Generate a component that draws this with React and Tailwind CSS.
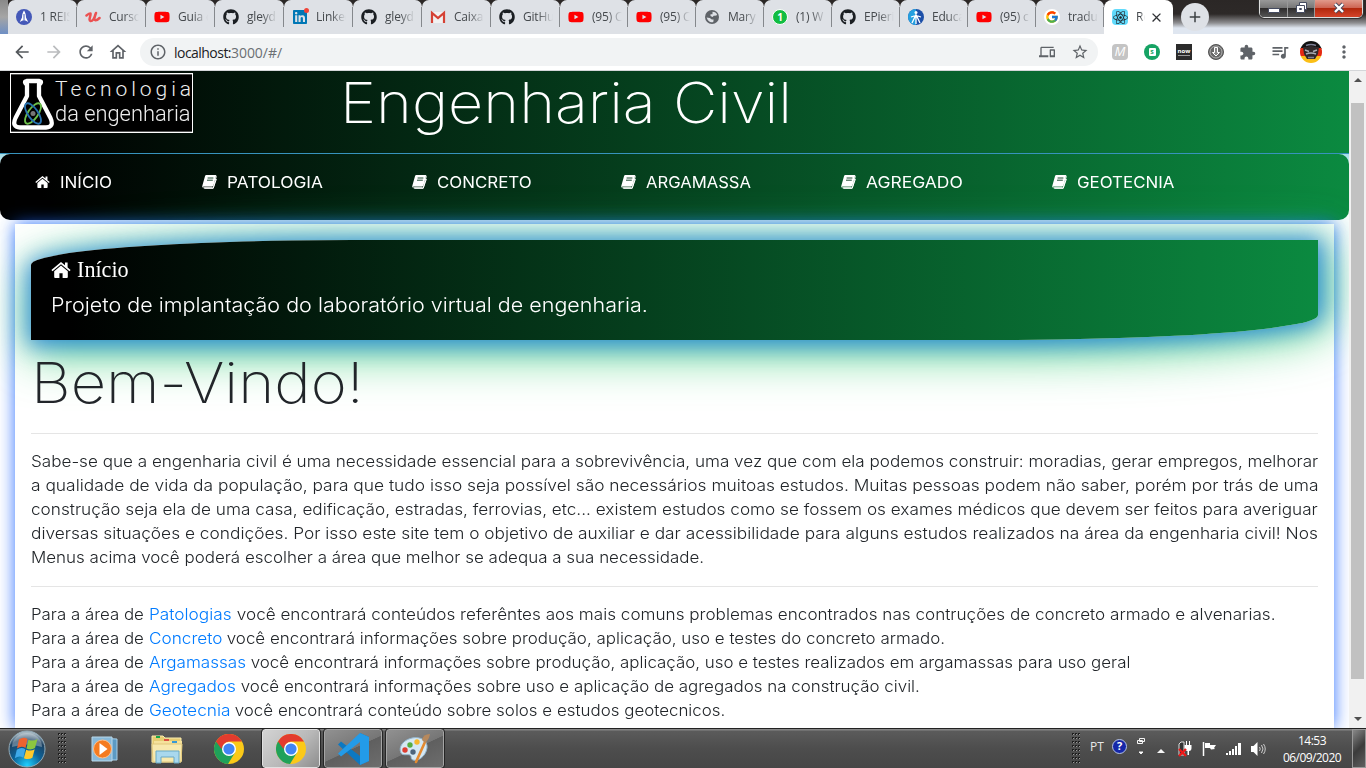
import React, { useLayoutEffect, useRef, useState } from "react";
import { FaGithub, FaYoutube, FaLinkedin, FaReact } from "react-icons/fa";
import { FcGoogle } from "react-icons/fc";
import {
  MdArrowBack, MdArrowForward, MdRefresh, MdInfoOutline, MdOutlineHome, MdDevices,
  MdStarBorder, MdExtension, MdQueueMusic, MdMoreVert, MdPublic, MdClose, MdAdd,
} from "react-icons/md";

/* Sets its tracking so that the text fills the given width. */
function Fit({ width, className = "", children }) {
  const ref = useRef(null);
  const [spacing, setSpacing] = useState(0);
  useLayoutEffect(() => {
    const el = ref.current;
    const natural = el.getBoundingClientRect().width;
    setSpacing((width - natural) / el.textContent.length);
  }, [width]);
  return (
    <span ref={ref} className={"inline-block whitespace-pre " + className} style={{ letterSpacing: spacing + "px" }}>
      {children}
    </span>
  );
}

/* Widens its letters so that the text fills the given width. */
function Wide({ width, className = "", children }) {
  const ref = useRef(null);
  const [scale, setScale] = useState(1);
  useLayoutEffect(() => {
    setScale(width / ref.current.offsetWidth);
  }, [width]);
  return (
    <span className={"inline-block whitespace-pre " + className} style={{ width: width + "px" }}>
      <span ref={ref} className="inline-block origin-left" style={{ transform: `scaleX(${scale})` }}>{children}</span>
    </span>
  );
}

const HomeIcon = ({ className }) => (
  <svg viewBox="0 0 20 16" className={className} fill="currentColor">
    <path d="M10 3.6 3.2 9.3V15q0 .9.9.9h4.3v-4.7h3.2v4.7h4.3q.9 0 .9-.9V9.3z" />
    <path d="M10 0 .4 8l1.1 1.2L10 2.2l8.5 7L19.600 8l-3-2.500V.6h-2.600v2.600z" />
  </svg>
);

const BookIcon = ({ className }) => (
  <svg viewBox="0 0 15 14" className={className}>
    <path d="M4.600.5h8.600q1.400 0 1 1.200l-2.500 9.600q-.3 1-1.400 1H3q-1.100 0-1.300.3c-.2.500.4.800 1.200.8h8.300L14.400 4" fill="none" stroke="currentColor" strokeWidth="1" />
    <path d="M4.500 0h8.400c1 0 1.300.600 1 1.600l-2.300 8.500c-.3 1-.8 1.400-1.800 1.400H2.400C1.500 11.500 1 11.700.7 12.700.2 12.300.1 11.500.4 10.500L3 1.300C3.300.400 3.700 0 4.500 0z" fill="currentColor" />
    <path d="M5.600 3h5.800M5 5.200h5.800" stroke="#04351b" strokeWidth=".9" />
  </svg>
);

const Nasa = () => (
  <svg viewBox="0 0 16 16" className="size-4"><circle cx="8" cy="8" r="8" fill="#4458b8" /><path d="M8 1.500c-1.300 2-2 4-2 7L3.800 13 6.500 11.500h3l2.700 1.500L10 8.500c0-3-.7-5-2-7z" fill="#fff" /><path d="M8 5v8" stroke="#4458b8" /></svg>
);
const Udemy = () => (
  <svg viewBox="0 0 16 16" className="size-4"><path d="M1.500 6.500c2-1.500 3.500-2.500 4-2 .8 1-2.500 7 0 7.500 2 .2 4-3 5-7M11 4c-1.500 4-2.500 7-.5 7.300 1.500.1 3-1.300 4-2.300" fill="none" stroke="#eb5252" strokeWidth="2.500" strokeLinecap="round" /></svg>
);
const Gmail = () => (
  <svg viewBox="0 0 16 16" className="size-4"><path d="M1 3h14v11H1z" fill="#f1f1f1" /><path d="M2 14V3.800L8 9l6-5.200V14" fill="none" stroke="#d54134" strokeWidth="2.200" /></svg>
);
const Linked = () => (
  <span className="relative flex size-4"><FaLinkedin className="size-4 text-[#0077b5]" /><span className="absolute -right-px -top-px size-[5px] rounded-full bg-[#f04438]" /></span>
);
const Whats = () => (
  <span className="flex size-4 items-center justify-center rounded-full border border-white bg-[#12bd42] font-['Open_Sans',sans-serif] text-[10px] font-bold text-white">1</span>
);
const Edu = () => (
  <svg viewBox="0 0 16 16" className="size-4"><circle cx="8" cy="8" r="8" fill="#1c4fa8" /><path d="M8 0v16A8 8 0 0 1 8 0z" fill="#25a0e0" /><circle cx="8" cy="3.500" r="1.500" fill="#fff" /><path d="M8 5.500 4 14M8 5.500 12 14M8 6v9M3 8l5-1.500L13 8" stroke="#fff" strokeWidth="1.300" fill="none" /></svg>
);
const Goog = () => (
  <span className="flex size-4 items-center justify-center rounded-full bg-white"><FcGoogle className="size-[14px]" /></span>
);
const Git = () => <FaGithub className="size-4 text-[#1b1f23]" />;
const Yt = () => <FaYoutube className="size-4 text-[#f00]" />;
const Globe = () => (
  <svg viewBox="0 0 16 16" className="size-4"><circle cx="8" cy="8" r="7" fill="#5f6368" /><path d="M8.500 2.800q3.500 0 4.700 3.200-2 1.200-3.200.5L8.500 8 6.500 7V5.200h2zM2.600 8.500l3.200.5 2 1.500 1.800 0-.3 2.500q-4.500 1.500-6.700-4.500z" fill="#dee1e6" /></svg>
);

const tabs = [
  [Nasa, "1 REIS"], [Udemy, "Curso"], [Yt, "Guia d"], [Git, "gleyd"], [Linked, "Linked"], [Git, "gleyd"],
  [Gmail, "Caixa"], [Git, "GitHu"], [Yt, "(95) C"], [Yt, "(95) C"], [Globe, "Mary"], [Whats, "(1) W"],
  [Git, "EPieri"], [Edu, "Educa"], [Yt, "(95) c"], [Goog, "tradu"],
];

function TabStrip() {
  return (
    <div className="flex h-[34px] bg-[linear-gradient(#2b2726_0,#2d2928_14px,#8f8f92_23px,#dfe6f0_28px)]">
      <div className="h-full w-2 bg-[linear-gradient(#898989,#a5a5a5_50%,#6e8fc4)]" />
      <div className="flex">
        {tabs.map(([Icon, label], i) => (
          <div key={i} className={(i < 8 ? "w-[69px]" : "w-[68px]") + " flex h-full items-center rounded-t-[7px] bg-[#dee1e6]"}>
            <div className="flex h-5 w-full items-center border-r border-[#85888c] pl-2">
              <span className="w-4 shrink-0"><Icon /></span>
              <span className="ml-2 w-[30px] overflow-hidden whitespace-nowrap text-[12px] leading-5 tracking-[-0.2px] text-[#45494d] [mask-image:linear-gradient(to_right,black_50%,transparent)]">{label}</span>
            </div>
          </div>
        ))}
      </div>
      <div className="flex h-full w-[69px] items-center rounded-t-lg bg-white pl-2">
        <span className="flex size-4 items-center justify-center rounded-sm bg-[#61dafb]"><FaReact className="size-[15px] text-[#20232a]" /></span>
        <span className="ml-2 w-[9px] overflow-hidden whitespace-nowrap text-[12px] text-[#45494d] [mask-image:linear-gradient(to_right,black_50%,transparent)]">Re</span>
        <MdClose className="ml-1 size-[15px] text-[#303236]" />
      </div>
      <div className="ml-2 mt-[3px] flex size-7 items-center justify-center rounded-full bg-[#dee1e6]"><MdAdd className="size-[18px] text-[#3c4043]" /></div>
      <div className="ml-[50px] flex h-[18px] w-[104px] overflow-hidden rounded-b-[5px] border border-t-0 border-[#ddd] outline outline-1 outline-[#333]">
        <div className="flex w-7 items-center justify-center border-r border-[#999] bg-[linear-gradient(#999,#777_45%,#2f2d2d_50%,#555)]"><div className="mt-1 h-[5px] w-3 rounded-[1px] border border-[#444b60] bg-white" /></div>
        <div className="flex w-[27px] items-center justify-center border-r border-[#999] bg-[linear-gradient(#999,#777_45%,#2f2d2d_50%,#555)]">
          <svg viewBox="0 0 13 13" className="mb-0.5 size-[13px]"><path d="M4.500 1.500h7v7H9.500v3h-8v-7h3z" fill="#fff" stroke="#444b60" /><path d="M4.500 4.500h5v5M4.500 7.500h2v1h-2z" fill="none" stroke="#444b60" /></svg>
        </div>
        <div className="flex grow items-center justify-center bg-[linear-gradient(#e19a8b,#ce6654_45%,#b2280d_50%,#d4442a)]">
          <svg viewBox="0 0 14 12" className="mb-0.5 h-3 w-[14px]"><path d="M3 2l8 8M11 2l-8 8" stroke="#47455a" strokeWidth="4" /><path d="M3 2l8 8M11 2l-8 8" stroke="#fff" strokeWidth="2.300" /></svg>
        </div>
      </div>
    </div>
  );
}

function Toolbar() {
  return (
    <div className="flex h-[37px] items-center border-b border-[#d4d6d9] bg-white pl-[12px] text-[#5f6368]">
      <MdArrowBack className="size-5 text-[#54585c]" />
      <MdArrowForward className="ml-[12px] size-5 text-[#babcbe]" />
      <MdRefresh className="ml-[12px] size-5" />
      <MdOutlineHome className="ml-[12px] size-5" />
      <div className="ml-3 flex h-7 w-[958px] items-center rounded-full bg-[#f1f3f4] pl-[9px] pr-[9px]">
        <MdInfoOutline className="size-[18px]" />
        <span className="ml-[7px] text-[14px] text-[#202124]"><Fit width={57}>localhost:</Fit><Fit width={51} className="text-[#6b6f73]">3000/#/</Fit></span>
        <MdDevices className="ml-auto size-4" />
        <MdStarBorder className="ml-4 size-[18px]" />
      </div>
      <span className="ml-[14px] flex size-4 items-center justify-center rounded bg-[#c4c4c4] text-[13px] italic text-white">M</span>
      <span className="ml-4 flex size-4 items-center justify-center rounded-full bg-[#16a364]"><span className="flex h-2 w-[7px] items-center justify-center rounded-[1px] bg-white text-[7px] font-bold text-[#16a364]">s</span></span>
      <span className="ml-4 flex h-4 w-4 flex-col items-center justify-center bg-[#2b2b2b] text-[6px] font-bold leading-[7px] text-white">now<span className="h-px w-3 bg-[#999]" /></span>
      <svg viewBox="0 0 16 16" className="ml-4 size-4"><circle cx="8" cy="8" r="7.500" fill="#696969" stroke="#555" /><circle cx="8" cy="8" r="6" fill="none" stroke="#ccc" strokeWidth=".7" /><path d="M6.500 3.500h3v5h2L8 12 4.500 8.500h2z" fill="#888" stroke="#fff" /></svg>
      <MdExtension className="ml-[15px] size-[17px]" />
      <MdQueueMusic className="ml-[14px] size-5" />
      <svg viewBox="0 0 22 22" className="ml-[10px] size-[22px]">
        <clipPath id="face"><circle cx="11" cy="11" r="11" /></clipPath>
        <g clipPath="url(#face)"><path d="M0 0h22v8H0z" fill="#111" /><path d="M0 7h22v8H0z" fill="#e52a12" /><path d="M0 15h22v7H0z" fill="#fbbf16" /><path d="M3 6l4 0q4-2 8 0l4 0-1 7-3 5H7l-3-5z" fill="#30292b" /><path d="M5 9l4 1.500M17 9l-4 1.500M6 13q5-2 10 0" stroke="#a9adb5" strokeWidth="1.500" fill="none" /><path d="M6 4.500q5-2 10 0M8 16.500h6" stroke="#7d7f94" strokeWidth="1.500" fill="none" /></g>
      </svg>
      <MdMoreVert className="ml-[12px] size-5" />
    </div>
  );
}

function Logo() {
  return (
    <div className="flex h-[60px] w-[183px] border border-white bg-black shadow-[inset_0_1px_0_#555,inset_0_-1px_0_#555]">
      <svg viewBox="0 0 42 56" className="ml-px mt-px h-14 w-[42px] shrink-0">
        <path d="M14.500 9.500q-3-3 0-3.500h13q3 .5 0 3.500M15 9v12L3.500 43q-4 9 4.500 9.500h26q8.500-.5 4.500-9.500L27 21V9" fill="none" stroke="#fff" strokeWidth="4.300" strokeLinecap="round" strokeLinejoin="round" />
        <ellipse cx="21" cy="38.500" rx="5" ry="12" transform="rotate(35 21 38.500)" fill="none" stroke="#6cc04a" strokeWidth="1.800" />
        <ellipse cx="21" cy="38.500" rx="5" ry="12" transform="rotate(-35 21 38.500)" fill="none" stroke="#2772b0" strokeWidth="1.800" />
        <circle cx="21" cy="38.500" r="2.500" fill="#777" />
      </svg>
      <div className="flex flex-col pl-px font-['Roboto',sans-serif] font-light text-[#eee]">
        <span className="h-[25px] pt-[3px] text-[21px] leading-[24px]"><Fit width={140}>Tecnologia</Fit></span>
        <span className="text-[22px] leading-[30px]"><Wide width={136}>da engenharia</Wide></span>
      </div>
    </div>
  );
}

const menu = [
  ["INÍCIO", 52, "w-[167px]"], ["PATOLOGIA", 96, "w-[210px]"], ["CONCRETO", 95, "w-[209px]"],
  ["ARGAMASSA", 105, "w-[220px]"], ["AGREGADO", 97, "w-[211px]"], ["GEOTECNIA", 97, "w-[150px]"],
];

const intro = [
  "Sabe-se que a engenharia civil é uma necessidade essencial para a sobrevivência, uma vez que com ela podemos construir: moradias, gerar empregos, melhorar",
  "a qualidade de vida da população, para que tudo isso seja possível são necessários muitoas estudos. Muitas pessoas podem não saber, porém por trás de uma",
  "construção seja ela de uma casa, edificação, estradas, ferrovias, etc... existem estudos como se fossem os exames médicos que devem ser feitos para averiguar",
  "diversas situações e condições. Por isso este site tem o objetivo de auxiliar e dar acessibilidade para alguns estudos realizados na área da engenharia civil! Nos",
  "Menus acima você poderá escolher a área que melhor se adequa a sua necessidade.",
];

const areas = [
  ["Patologias", 83, " você encontrará conteúdos referêntes aos mais comuns problemas encontrados nas contruções de concreto armado e alvenarias.", 1043],
  ["Concreto", 73, " você encontrará informações sobre produção, aplicação, uso e testes do concreto armado.", 723],
  ["Argamassas", 97, " você encontrará informações sobre produção, aplicação, uso e testes realizados em argamassas para uso geral", 884],
  ["Agregados", 87, " você encontrará informações sobre uso e aplicação de agregados na construção civil.", 684],
  ["Geotecnia", 81, " você encontrará conteúdo sobre solos e estudos geotecnicos.", 495],
];

function Page() {
  return (
    <div className="flex h-[657px] bg-white">
      <div className="flex w-[1349px] flex-col overflow-hidden font-['Inter',sans-serif] font-light text-[#212529]">
        <header className="flex h-[83px] shrink-0 items-start border-b border-[#3793bd] bg-[linear-gradient(to_right,#000_0%,#000_3%,#0b8a40_100%)] pl-[10px] pt-[2px]">
          <Logo />
          <h1 className="ml-[147px] -mt-[3px] text-[56px] font-extralight leading-[67px] text-white"><Wide width={452}>Engenharia Civil</Wide></h1>
        </header>
        <div className="h-[66px] shrink-0 bg-[linear-gradient(#a3dce5,#fff_30%)]">
          <nav className="flex h-full rounded-[10px] bg-[linear-gradient(to_right,#000_0%,#000_3%,#0b8a40_100%)] pl-[35px] text-[16px] font-normal text-white">
            {menu.map(([label, w, cell], i) => (
              <a key={label} className={cell + " flex h-14 items-center"}>
                {i === 0 ? <HomeIcon className="h-3 w-[15px]" /> : <BookIcon className="h-[14px] w-[15px]" />}
                <Wide width={w} className="ml-[10px]">{label}</Wide>
              </a>
            ))}
          </nav>
        </div>
        <main className="relative mx-[15px] mt-1 h-[600px] bg-white px-4 pt-4 shadow-[0_0_16px_rgba(30,100,255,0.9)]">
          <section className="h-[100px] rounded-[25%_0_25%_0] bg-[linear-gradient(to_right,#000_0%,#000_3%,#0b8a40_100%)] pl-5 pt-4 text-white shadow-[1px_2px_22px_4px_rgba(20,110,230,0.75),5px_8px_46px_8px_rgba(50,205,110,0.75)]">
            <div className="flex h-7 items-center font-['Liberation_Serif',serif] text-[23px] font-normal"><HomeIcon className="mr-[6px] h-4 w-5" /><Wide width={52}>Início</Wide></div>
            <p className="mt-[6px] text-[20px] leading-[30px]"><Wide width={597}>Projeto de implantação do laboratório virtual de engenharia.</Wide></p>
          </section>
          <h2 className="relative pt-[10px] text-[56px] font-extralight leading-[67px]"><Wide width={333}>Bem-Vindo!</Wide></h2>
          <hr className="mt-4 border-[#e5e5e5]" />
          <div className="mt-[15px] text-[16px] leading-6">
            {intro.map((t, i) => <div key={i} className="h-6"><Wide width={i < 4 ? 1287 : 673}>{t}</Wide></div>)}
          </div>
          <hr className="mt-[17px] border-[#e5e5e5]" />
          <div className="mt-[15px] text-[16px] leading-6">
            {areas.map(([name, w, rest, rw]) => (
              <div key={name} className="h-6 whitespace-nowrap"><Wide width={118}>{"Para a área de "}</Wide><Wide width={w} className="text-[#007bff]">{name}</Wide><Wide width={rw}>{rest}</Wide></div>
            ))}
          </div>
        </main>
      </div>
      <div className="flex w-[17px] flex-col items-center bg-[#f1f1f1]">
        <svg viewBox="0 0 8 4" className="mt-[7px] h-1 w-2"><path d="M4 0l4 4H0z" fill="#505050" /></svg>
        <div className="mt-[21px] h-[576px] w-[13px] bg-[#c1c1c1]" />
        <svg viewBox="0 0 8 4" className="mb-[7px] mt-auto h-1 w-2"><path d="M0 0h8L4 4z" fill="#505050" /></svg>
      </div>
    </div>
  );
}

const Chrome = () => (
  <svg viewBox="0 0 30 30" className="size-[30px]">
    <circle cx="15" cy="15" r="15" fill="#fbc918" />
    <path d="M2 7.500A15 15 0 0 0 14 30l7-11.500-6-3.500z" fill="#1fa15a" />
    <path d="M2 7.500A15 15 0 0 1 28 7.500H15q-6 1-7.500 7.500z" fill="#e33b2e" />
    <circle cx="15" cy="15" r="7" fill="#fff" /><circle cx="15" cy="15" r="5.600" fill="#4285f4" />
  </svg>
);

const Grip = () => (
  <svg viewBox="0 0 9 31" className="h-[31px] w-[9px]">
    {Array.from({ length: 8 }, (_, r) => [0, 3, 6].map((x) => <g key={r + "-" + x}><rect x={x} y={r * 4} width="2" height="2" fill="#1e1e1e" /><rect x={x + 1} y={r * 4 + 1} width="1" height="1" fill="#999" /></g>))}
  </svg>
);

function Taskbar() {
  return (
    <div className="flex h-10 items-center border-t border-[#222] bg-[linear-gradient(#858585_0,#858585_1px,#5b5b5b_2px,#4d4d4d_50%,#464646)]">
      <svg viewBox="0 0 38 38" className="ml-2 size-[38px] shrink-0">
        <defs>
          <radialGradient id="orb" cx=".5" cy=".95" r=".9"><stop offset="0" stopColor="#20d0ff" /><stop offset=".45" stopColor="#0c6399" /><stop offset=".8" stopColor="#1e4262" /><stop offset="1" stopColor="#a5b7c2" /></radialGradient>
        </defs>
        <circle cx="19" cy="19" r="18" fill="url(#orb)" stroke="#92abb8" />
        <path d="M4 17a15 14 0 0 1 30 0q-15-5-30 0z" fill="#fff" opacity=".3" />
        <path d="M11 9.500q4.500-3 8.500-.5l-2 9q-4-2.500-8.500.5z" fill="#ee6330" /><path d="M20.500 9.700q4.500 2 9-.7l-2.500 9q-4 2.500-8.500.5z" fill="#8dc63f" />
        <path d="M8.800 19.700q4.500-3 8.500-.5l-2 8.500q-4-2.500-8.500.5z" fill="#3fa9e8" /><path d="M18.200 19.700q4.500 2 8.500-.5l-2.300 8.500q-4 2.500-8.500.5z" fill="#fdc92c" />
      </svg>
      <span className="ml-[12px]"><Grip /></span>
      <svg viewBox="0 0 28 26" className="ml-[24px] h-[26px] w-7">
        <path d="M6 2l20 1v21H6z" fill="#5c9ac3" stroke="#a9cee5" /><path d="M1 1h20v24H1z" fill="#88b9d9" stroke="#b9d8ea" /><circle cx="11.500" cy="13" r="9" fill="#f47b20" stroke="#ffc08a" /><path d="M8.500 7l8 6-8 6z" fill="#fff" />
      </svg>
      <svg viewBox="0 0 32 30" className="ml-[32px] h-[30px] w-8">
        <path d="M1 2h11l2 2h16v24H1z" fill="#e7cd72" stroke="#faecae" /><path d="M3 7h28v20H3z" fill="#f5e29b" /><path d="M1 10h30l-1 18H2z" fill="#f8e9ad" stroke="#e0c77b" />
        <path d="M5 2h4v2H5z" fill="#18a648" /><path d="M13 5h5v2h-5z" fill="#dc5142" /><path d="M21 7h5v2h-5z" fill="#3899d6" />
        <path d="M5 17h23v12h-5v-6H10v6H5z" fill="#a9d8ed" stroke="#68a9c6" />
      </svg>
      <span className="ml-[31px]"><Chrome /></span>
      <div className="ml-[18px] flex h-[39px] w-[58px] items-center justify-center rounded-[3px] border border-[#e0e0e0] bg-[linear-gradient(135deg,#d4d4d4,#b8b8b8_55%,#8e8e8e)] outline outline-1 outline-[#252525]"><Chrome /></div>
      <div className="ml-1 flex h-[39px] w-[58px] items-center justify-center rounded-[3px] border border-[#a5a5a5] bg-[linear-gradient(155deg,#919191,#767676_50%,#5f5f5f_51%,#6d6d6d)] outline outline-1 outline-[#252525]">
        <svg viewBox="0 0 32 32" className="size-8"><path d="M23 0l9 4v24l-9 4L1 11.500 4 8.500 23 23z" fill="#0c78c2" /><path d="M23 0l9 4v24l-9 4V9L4 23.500l-3-3z" fill="#239be8" /></svg>
      </div>
      <div className="ml-1 flex h-[39px] w-[58px] items-center justify-center rounded-[3px] border border-[#a5a5a5] bg-[linear-gradient(155deg,#919191,#767676_50%,#5f5f5f_51%,#6d6d6d)] outline outline-1 outline-[#252525]">
        <svg viewBox="0 0 32 32" className="size-8"><path d="M13 5c9-2 16 3 15 10-1 8-9 14-14 12-3-1-1-4-3-5-3-1-7 1-9-2C-1 14 4 7 13 5z" fill="#d5e8f3" stroke="#91b3cb" /><circle cx="6" cy="17" r="2.700" fill="#dd3e31" /><circle cx="11" cy="12" r="2.700" fill="#55ad42" /><circle cx="18" cy="9" r="2.700" fill="#f5b72c" /><circle cx="14" cy="19" r="2.700" fill="#4c647c" /><path d="M26 9L17 29" stroke="#e48a30" strokeWidth="2.600" strokeLinecap="round" /><path d="M23 7q1-6 8-6-1 6-5 9z" fill="#b7895d" /></svg>
      </div>
      <span className="ml-auto"><Grip /></span>
      <span className="ml-[9px] mb-1 text-[12px] text-[#e8e8e8]"><Fit width={14}>PT</Fit></span>
      <span className="ml-2 mb-1 flex size-[15px] items-center justify-center rounded-full border border-[#b6c3e3] bg-[#1527a8] text-[11px] font-bold text-white">?</span>
      <svg viewBox="0 0 9 17" className="ml-[10px] mb-1 h-[17px] w-[9px]" fill="none" stroke="#f5f5f5"><path d="M2.500.5h5v3h-5zM.5 2.500h5v3h-5z" fill="#555" /><path d="M2 14h4L4 16z" fill="#fff" /></svg>
      <svg viewBox="0 0 8 4" className="ml-[11px] mt-1 h-1 w-2"><path d="M4 0l4 4H0z" fill="#f5f5f5" /></svg>
      <svg viewBox="0 0 14 16" className="ml-[13px] h-4 w-[14px]"><path d="M1 14V3l2-2h3v13z" fill="#333" stroke="#ddd" /><path d="M8.500 0v4M11.500 0v4" stroke="#fff" /><path d="M6.500 4h7v3q0 3-2.500 3v4H9.500v-4q-3 0-3-3z" fill="#fff" /><path d="M1 8l7 7M8 8l-7 7" stroke="#ed1717" strokeWidth="2.300" /></svg>
      <svg viewBox="0 0 15 15" className="ml-[10px] h-[15px] w-[15px]"><path d="M1.500 1v14" stroke="#fff" strokeWidth="1.500" /><path d="M3 2h5v2h6l-2 3 1 1-4 .5L8 7H3z" fill="#fff" /></svg>
      <svg viewBox="0 0 15 12" className="ml-[9px] h-3 w-[15px]" fill="#fff"><path d="M0 10h2v2H0zM3 8h2v4H3zM6 6h2v6H6zM9 3h2v9H9zM12 0h3v12h-3z" /></svg>
      <svg viewBox="0 0 16 14" className="ml-[9px] h-[14px] w-4"><path d="M1 4h2.500l4-4v14l-4-4H1z" fill="#fff" /><path d="M9.500 5q1.500 2 0 4M11.500 3q3 4 0 8M13.500 2q3.500 5 0 10" fill="none" stroke="#ddd" strokeWidth=".9" /></svg>
      <div className="ml-[17px] flex w-[58px] flex-col items-center text-[12px] leading-[17px] text-white"><Fit width={28}>14:53</Fit><Fit width={58}>06/09/2020</Fit></div>
      <div className="ml-[11px] h-[39px] w-[14px] shrink-0 border border-[#999] bg-[linear-gradient(135deg,#888,#3b3b3b_50%,#606060)]" />
    </div>
  );
}

export default function App() {
  return (
    <div className="h-[768px] w-[1366px] overflow-hidden bg-white font-['Open_Sans',sans-serif]">
      <TabStrip />
      <Toolbar />
      <Page />
      <Taskbar />
    </div>
  );
}
